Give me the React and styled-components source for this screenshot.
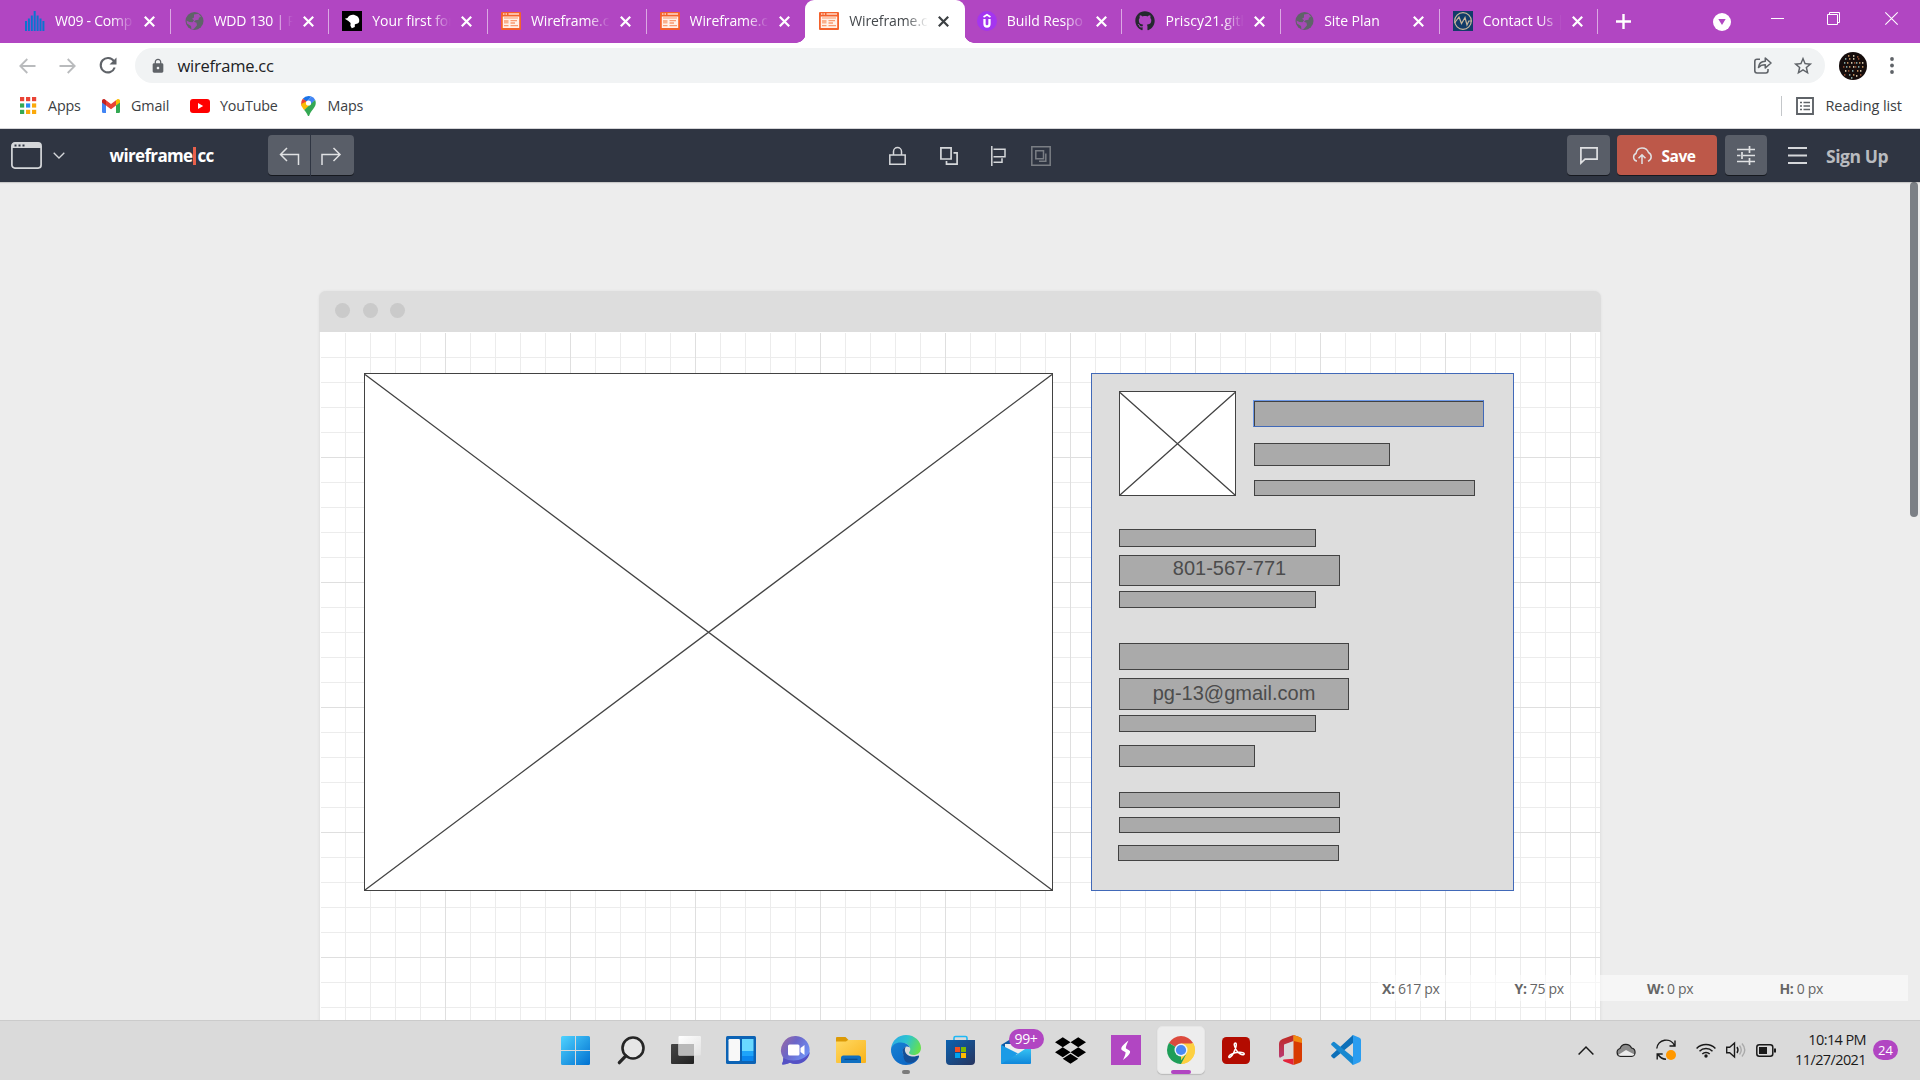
import React from "react";
import styled, { createGlobalStyle, css } from "styled-components";
import { FaGithub, FaDropbox } from "react-icons/fa";
import { MdLock, MdStarBorder } from "react-icons/md";

const Global = createGlobalStyle`
  * { box-sizing: border-box; }
  body { margin: 0; overflow: hidden; background: #ededed; font-family: "Open Sans", "Noto Sans", sans-serif; }
  svg { display: block; flex: none; overflow: visible; }
`;

const purple = "#b146c2";

const Screen = styled.div`
  width: 1920px;
  height: 1080px;
  display: flex;
  flex-direction: column;
  overflow: hidden;
`;

const Text = styled.span`
  white-space: pre;
  font-size: ${(p) => p.$size || 14}px;
  font-weight: ${(p) => p.$weight || 400};
  letter-spacing: ${(p) => p.$track || 0}px;
  color: ${(p) => p.$color || "#3c4043"};
  margin-left: ${(p) => p.$ml || 0}px;
  width: ${(p) => (p.$w ? `${p.$w}px` : "auto")};
  flex: none;
  line-height: 20px;
`;

const Slot = styled.div`
  flex: none;
  display: flex;
  align-items: center;
  justify-content: center;
  width: ${(p) => p.$w}px;
  margin-left: ${(p) => p.$ml || 0}px;
`;

/* ---------- tab strip ---------- */

const TabStrip = styled.div`
  flex: none;
  height: 43px;
  display: flex;
  align-items: center;
  padding-left: 11px;
  background: ${purple};
`;

const Tab = styled.div`
  flex: none;
  position: relative;
  width: 158.65px;
  height: 43px;
  display: flex;
  align-items: center;
  padding: 0 13px 1px 14px;
  ${(p) =>
    p.$line &&
    css`
      &::after {
        content: "";
        position: absolute;
        right: -1px;
        top: 9px;
        width: 1px;
        height: 25px;
        background: #dba9e3;
      }
    `}
  ${(p) =>
    p.$active &&
    css`
      background:
        radial-gradient(circle at 0 0, transparent 9.5px, #fff 10px) right bottom / 10px 10px no-repeat,
        radial-gradient(circle at 100% 0, transparent 9.5px, #fff 10px) left bottom / 10px 10px no-repeat;
      background: none;
      margin: 0 -10px;
      width: 178.65px;
      padding-left: 25px;
      padding-right: 22px;
      z-index: 1;
      &::before {
        content: "";
        position: absolute;
        z-index: -1;
        inset: 0 -0.35px 0 1px;
        background:
          radial-gradient(circle at 0 0, transparent 9.5px, #fff 10px) left bottom / 10px 10px no-repeat,
          radial-gradient(circle at 100% 0, transparent 9.5px, #fff 10px) right bottom / 10px 10px no-repeat;
        transform: none;
      }
    `}
`;

const ActiveShape = styled.div`
  position: absolute;
  z-index: -1;
  inset: 0 8px 0 11px;
  border-radius: 9px 9px 0 0;
  background: #fff;
`;

const Flare = styled.i`
  position: absolute;
  bottom: 0;
  width: 10px;
  height: 10px;
  ${(p) => (p.$right ? "left: calc(100% - 0.5px)" : "right: calc(100% - 0.5px)")};
  background: radial-gradient(circle at ${(p) => (p.$right ? "100%" : "0")} 0, transparent 9.5px, #fff 10px);
`;

const ActiveTab = styled(Tab)`
  background: none;
  &::before {
    display: none;
  }
`;

const TabTitle = styled.span`
  flex: none;
  width: 79px;
  height: 22px;
  line-height: 22px;
  margin-left: 10px;
  white-space: pre;
  font-size: 14px;
  letter-spacing: ${(p) => p.$track}px;
  color: ${(p) => (p.$active ? "#45494d" : "#fff")};
  mask-image: linear-gradient(to right, #000 57px, transparent 79px);
`;

const TabClose = styled.div`
  width: 12px;
  margin-left: 10px;
`;

const Cross = ({ color, size = 11, w = 2.2 }) => (
  <svg width={size} height={size} viewBox="0 0 11 11" stroke={color} strokeWidth={w}>
    <path d="M.8.8l9.4 9.4M10.2.8L.8 10.2" />
  </svg>
);

const BarsIcon = () => (
  <svg width="20" height="20" viewBox="0 0 20 20" fill="#0a74d0">
    {[[0, 10], [2.9, 7.5], [5.8, 4.5], [8.7, 0], [11.6, 4.5], [14.5, 7.5], [17.4, 10]].map(([x, y]) => (
      <rect key={x} x={x} y={y} width="2" height={20 - y} />
    ))}
  </svg>
);
const GlobeIcon = () => (
  <svg width="20" height="20" viewBox="0 0 20 20">
    <circle cx="10.500" cy="10" r="9" fill="#5f6368" />
    <path d="M10 3.500l4.500-.8 2.500 3-2 1-.5 2-3 .5-1.500 1.500 2.500 1 .5 2.500-3 3.500-2.500.7-.5-3.500-4-2.500-.5-3 3 1.500 3 .3 1.500-2-2-1.500 2-1.200z" fill={purple} opacity=".85" />
  </svg>
);
const DuckIcon = () => (
  <svg width="20" height="20" viewBox="0 0 20 20">
    <rect width="20" height="20" fill="#000" />
    <path d="M2.800 7.800L5.500 7C7 4.500 10 3.200 13 4.200c3.500 1 5 4 4 7-1 1.500-3.200 1.600-4.200 2.300v2.600l-3 1.200-1.400-2.600.2-2.600-2.200-2z" fill="#fff" />
  </svg>
);
const WireIcon = () => (
  <svg width="20" height="20" viewBox="0 0 20 20">
    <rect y="1" width="20" height="18" rx="1" fill="#f4622d" />
    <path d="M2 3h1.500M4.500 3H6M7.500 3H18" stroke="#ffd9c8" strokeWidth="1.500" />
    <rect x="1.800" y="5.500" width="16.400" height="11.500" fill="#fff1e9" />
    <path d="M3 7h14" stroke="#fbb493" strokeWidth="1.500" />
    <rect x="3" y="9" width="4.500" height="3.500" fill="#fbb08c" />
    <path d="M9.500 9.700H16M9.500 12H14M3 14.700h4.500M9.500 14.700H17" stroke="#f99a70" strokeWidth="1.300" />
  </svg>
);
const UdacityIcon = () => (
  <svg width="20" height="20" viewBox="0 0 20 20">
    <circle cx="10" cy="10" r="10" fill="#a435f0" />
    <path d="M6.500 6L10 3.800 13.500 6" fill="none" stroke="#fff" strokeWidth="1.800" />
    <path d="M7.500 8v5a2.500 2.500 0 0 0 5 0V8" fill="none" stroke="#fff" strokeWidth="2.300" />
  </svg>
);
const MgIcon = () => (
  <svg width="20" height="20" viewBox="0 0 20 20">
    <rect width="20" height="20" fill="#123c69" />
    <circle cx="10" cy="10" r="8.300" fill="none" stroke="#c9b79c" strokeWidth="1.200" />
    <path d="M1.500 12L6 6l2.500 6.500L12 6.500l2 7.500 1.800-4h3" fill="none" stroke="#c9b79c" strokeWidth="1.200" />
  </svg>
);

const tabs = [
  { t: "W09 - Comp", icon: <BarsIcon />, line: true, track: -0.25 },
  { t: "WDD 130 | P", icon: <GlobeIcon />, line: true, track: -0.2 },
  { t: "Your first for", icon: <DuckIcon />, line: true, track: -0.05 },
  { t: "Wireframe.c", icon: <WireIcon />, line: true, track: -0.1 },
  { t: "Wireframe.c", icon: <WireIcon />, track: -0.1 },
  { t: "Wireframe.c", icon: <WireIcon />, active: true, track: -0.1 },
  { t: "Build Respo", icon: <UdacityIcon />, line: true, track: -0.1 },
  { t: "Priscy21.gith", icon: <FaGithub size={20} color="#24292e" />, line: true, track: 0.1 },
  { t: "Site Plan", icon: <GlobeIcon />, line: true, track: -0.05 },
  { t: "Contact Us |", icon: <MgIcon />, line: true, track: -0.05 },
];

/* ---------- address bar ---------- */

const AddressRow = styled.div`
  flex: none;
  height: 45px;
  display: flex;
  align-items: center;
  background: #fff;
`;

const Omnibox = styled.div`
  width: 1690px;
  height: 35px;
  margin-left: 18px;
  border-radius: 18px;
  background: #f1f3f4;
  display: flex;
  align-items: center;
`;

const Push = styled.div`
  flex: 1;
`;

const Avatar = () => (
  <svg width="28" height="28" viewBox="0 0 28 28">
    <circle cx="14" cy="14" r="14" fill="#150d0c" />
    {[[9, 3], [14, 3], [18, 4], [6, 6], [10, 6], [14, 6], [19, 6], [5, 10], [8, 10], [12, 10], [15, 10], [17, 10], [20, 10], [23, 10], [4, 14], [7, 14], [10, 14], [14, 14], [16, 14], [19, 14], [23, 14], [6, 18], [9, 18], [13, 18], [18, 18], [21, 18], [5, 22], [10, 22], [14, 22], [17, 23], [21, 22], [12, 25]].map(([x, y], i) => (
      <rect key={i} x={x} y={y} width="1.400" height="1.800" fill={["#b98b5a", "#cfc3a8", "#8a4a2e", "#7fa3a0"][i % 4]} />
    ))}
  </svg>
);

const BookmarkRow = styled.div`
  flex: none;
  height: 41px;
  padding: 0 0 5px 20px;
  display: flex;
  align-items: center;
  background: #fff;
  border-bottom: 1px solid #d5d5d8;
`;

const Divider = styled.div`
  width: 1px;
  height: 20px;
  background: #c4c7ca;
`;

const AppsIcon = () => (
  <svg width="16" height="17" viewBox="0 0 16 17">
    {["#ea4335", "#ea4335", "#ea4335", "#34a853", "#2a8af6", "#fba90a", "#34a853", "#fba90a", "#fba90a"].map((c, i) => (
      <rect key={i} x={(i % 3) * 6} y={Math.floor(i / 3) * 6.4} width="4.200" height="4.200" fill={c} />
    ))}
  </svg>
);
const GmailIcon = () => (
  <svg width="18" height="14" viewBox="0 0 18 14">
    <path d="M0 2v10.800A1.200 1.200 0 0 0 1.200 14H4V6z" fill="#4285f4" />
    <path d="M18 2v10.800a1.200 1.200 0 0 1-1.200 1.200H14V6z" fill="#34a853" />
    <path d="M14 1.200V6.500l4-3V1.800C18 .2 16.200-.6 15 .4z" fill="#fbbc04" />
    <path d="M4 6.500V1.200l5 3.800 5-3.800v5.300l-5 3.800z" fill="#ea4335" />
    <path d="M0 1.800v1.700l4 3V1.200L3 .4C1.800-.6 0 .2 0 1.800z" fill="#c5221f" />
  </svg>
);
const YoutubeIcon = () => (
  <svg width="20" height="14" viewBox="0 0 20 14">
    <rect width="20" height="14" rx="3" fill="#f00" />
    <path d="M8 4l5.200 3L8 10z" fill="#fff" />
  </svg>
);
const MapsIcon = () => (
  <svg width="15" height="20" viewBox="0 0 15 20">
    <path d="M7.500 0A7.400 7.400 0 0 0 1.800 2.700L5.500 6l5-5.400A7 7 0 0 0 7.500 0z" fill="#1a73e8" />
    <path d="M1.800 2.700A7 7 0 0 0 .1 8l1 3L6 5.600z" fill="#ea4335" />
    <path d="M10.500.6L6.500 5l3.500 4 4.200-5A7.400 7.400 0 0 0 10.500.6z" fill="#4285f4" />
    <path d="M.1 8c.3 2.200 1.500 4 3 6L10 9 5.500 5.500z" fill="#fbbc04" />
    <path d="M14.200 4L3.200 14c1.800 2.200 3 3.700 3.500 5.500q.8 1.200 1.600 0c.7-2.600 2-4 3.700-6.300 2-2.600 3.700-5 2.200-9.200z" fill="#34a853" />
    <circle cx="7.500" cy="7" r="2.600" fill="#fff" />
  </svg>
);

/* ---------- application header ---------- */

const AppHeader = styled.header`
  flex: none;
  height: 53px;
  display: flex;
  align-items: center;
  background: #2f3542;
  color: #d5d7da;
  position: relative;
  z-index: 1;
  box-shadow: 0 1px 1px rgba(0, 0, 0, 0.15);
`;

const ToolButton = styled.button`
  flex: none;
  width: ${(p) => p.$w}px;
  height: 40px;
  margin: 0 0 1px ${(p) => p.$ml || 0}px;
  padding: 0;
  border: 0;
  border-radius: ${(p) => p.$radius || "4px"};
  background: ${(p) => (p.$primary ? "#bd5849" : "#595e68")};
  box-shadow: 0 1px 0 #16191f;
  color: #e0e1e3;
  font-family: inherit;
  display: flex;
  align-items: center;
  justify-content: center;
  padding: 1px ${(p) => p.$pr || 0}px 0 0;
`;

const Logo = styled.div`
  flex: none;
  width: 108px;
  margin-left: 45px;
  display: flex;
  align-items: center;
  font-size: 17px;
  font-weight: 700;
  line-height: 20px;
  color: #fff;
`;

const LogoWord = styled.span`
  letter-spacing: ${(p) => p.$track}px;
`;

const LogoBar = styled.i`
  width: 3px;
  height: 18px;
  margin: 1px 1px 0 1px;
  background: #e9604b;
`;

const Ico = ({ w, h, sw = 1.5, color = "currentColor", children }) => (
  <svg width={w} height={h} viewBox={`0 0 ${w} ${h}`} fill="none" stroke={color} strokeWidth={sw}>
    {children}
  </svg>
);

/* ---------- canvas ---------- */

const Workspace = styled.main`
  flex: none;
  position: relative;
  height: 838px;
  padding: 109px 0 0 319px;
  background: #ededed;
  overflow: hidden;
`;

const SketchWindow = styled.section`
  width: 1282px;
  height: 760px;
  border-radius: 7px 7px 0 0;
  overflow: hidden;
  background: #e3e3e3;
  padding: 0 1px;
  display: flex;
  flex-direction: column;
  box-shadow: 0 0 3px rgba(0, 0, 0, 0.06);
`;

const SketchBar = styled.div`
  flex: none;
  height: 41px;
  margin: 0 -1px;
  padding: 0 0 2px 16px;
  background: #ddd;
  display: flex;
  align-items: center;
  gap: 12.5px;
`;

const Dot = styled.i`
  width: 15px;
  height: 15px;
  border-radius: 50%;
  background: #cacaca;
`;

const Paper = styled.div`
  position: relative;
  flex: 1;
  background-color: #fff;
  background-image:
    linear-gradient(to right, #dfdfdf 1px, transparent 1px),
    linear-gradient(to bottom, #dfdfdf 1px, transparent 1px),
    linear-gradient(to right, #ececec 1px, transparent 1px),
    linear-gradient(to bottom, #ececec 1px, transparent 1px);
  background-size: 125px 125px, 125px 125px, 25px 25px, 25px 25px;
  box-shadow: inset 1px 1px 0 #fff;
`;

/* A shape dropped on the free drawing surface. */
const Shape = styled.div`
  position: absolute;
  left: ${(p) => p.$x}px;
  top: ${(p) => p.$y}px;
  width: ${(p) => p.$w}px;
  height: ${(p) => p.$h}px;
  border: 1px solid ${(p) => p.$line || "#424242"};
  background: ${(p) => p.$fill || "#aaa"};
  ${(p) =>
    p.$selected &&
    css`
      border-color: #6c97e6 #4169b8 #4169b8 #6c97e6;
      box-shadow: inset 1px 1px 0 #424242;
    `}
`;

const ShapeLabel = styled.div`
  font-family: "Liberation Sans", Arial, sans-serif;
  font-size: 20px;
  line-height: 24px;
  color: #4c4c4c;
  text-align: center;
  padding-top: ${(p) => p.$pt || 0}px;
`;

const Placeholder = ({ x, y, w, h }) => (
  <Shape $x={x} $y={y} $w={w} $h={h} $fill="#fff">
    <svg width={w - 2} height={h - 2} viewBox={`0 0 ${w - 2} ${h - 2}`} stroke="#444" strokeWidth="1.300">
      <path d={`M0 .5L${w - 2} ${h - 2}M${w - 2} .5L0 ${h - 2}`} />
    </svg>
  </Shape>
);

const bars = [
  { x: 933, y: 68, w: 231, h: 27, selected: true },
  { x: 934, y: 111, w: 136, h: 23 },
  { x: 934, y: 148, w: 221, h: 16 },
  { x: 799, y: 197, w: 197, h: 18 },
  { x: 799, y: 223, w: 221, h: 31, label: "801-567-771", pt: 0 },
  { x: 799, y: 259, w: 197, h: 17 },
  { x: 799, y: 311, w: 230, h: 27 },
  { x: 799, y: 346, w: 230, h: 32, label: "pg-13@gmail.com", pt: 2 },
  { x: 799, y: 383, w: 197, h: 17 },
  { x: 799, y: 413, w: 136, h: 22 },
  { x: 799, y: 460, w: 221, h: 16 },
  { x: 799, y: 485, w: 221, h: 16 },
  { x: 798, y: 513, w: 221, h: 16 },
];

const ScrollThumb = styled.div`
  position: absolute;
  right: 2px;
  top: 0;
  width: 8px;
  height: 335px;
  border-radius: 4px;
  background: #7c8086;
`;

const Readout = styled.div`
  position: absolute;
  left: 1378px;
  top: 793px;
  width: 530px;
  height: 26px;
  padding: 2px 0 0 4px;
  display: grid;
  grid-template-columns: repeat(4, 132.5px);
  align-items: center;
  background: rgba(255, 255, 255, 0.5);
  font-size: 14px;
  letter-spacing: -0.35px;
  line-height: 20px;
  color: #666;
`;

/* ---------- taskbar ---------- */

const Taskbar = styled.footer`
  flex: none;
  height: 60px;
  display: flex;
  align-items: center;
  padding-left: 548px;
  padding-bottom: 0;
  background: #dadada;
  box-shadow: inset 0 1px 0 #cbcbcb;
`;

const TaskItem = styled.div`
  flex: none;
  position: relative;
  width: 55px;
  height: 48px;
  display: flex;
  align-items: center;
  justify-content: center;
  &::after {
    content: "";
    position: absolute;
    left: 50%;
    bottom: 0;
    height: 4px;
    border-radius: 2px;
    width: ${(p) => (p.$active ? 20 : 8)}px;
    transform: translateX(-50%);
    display: ${(p) => (p.$active || p.$open ? "block" : "none")};
    background: ${(p) => (p.$active ? purple : "#7b7b7b")};
  }
`;

const Tile = styled.div`
  width: 48px;
  height: 48px;
  border-radius: 5px;
  border: 1px solid #e6e6e6;
  background: #ededed;
  box-shadow: 0 1px 1px rgba(0, 0, 0, 0.15);
  display: flex;
  align-items: center;
  justify-content: center;
`;

const MailBadge = styled.div`
  position: absolute;
  left: 20.5px;
  top: 3px;
  width: 35px;
  height: 20px;
  border-radius: 10px;
  background: ${purple};
  color: #fff;
  font-size: 14px;
  letter-spacing: -0.3px;
  line-height: 20px;
  text-align: center;
`;

const Clock = styled.div`
  width: 74px;
  margin-left: 16px;
  text-align: right;
  font-size: 14.5px;
  line-height: 20px;
  color: #1a1a1a;
  white-space: nowrap;
`;

const ClockLine = styled.div`
  letter-spacing: ${(p) => p.$track}px;
`;

const DayBadge = styled.div`
  width: 25px;
  height: 20px;
  margin: 0 22px 0 7px;
  border-radius: 10px;
  background: ${purple};
  color: #fff;
  font-size: 13px;
  line-height: 21px;
  text-align: center;
`;

const Grad = ({ id, a, b, x2 = 1, y2 = 1 }) => (
  <linearGradient id={id} x1="0" y1="0" x2={x2} y2={y2}>
    <stop offset="0" stopColor={a} />
    <stop offset="1" stopColor={b} />
  </linearGradient>
);

const StartIcon = () => (
  <svg width="29" height="29" viewBox="0 0 29 29">
    <defs><linearGradient id="win" gradientUnits="userSpaceOnUse" x1="0" y1="0" x2="29" y2="29"><stop offset="0" stopColor="#4fd3ff" /><stop offset="1" stopColor="#0070d0" /></linearGradient></defs>
    <path d="M1.500 0H14v14H0V1.500Q0 0 1.500 0zM15 0h12.500Q29 0 29 1.500V14H15zM0 15h14v14H1.500Q0 29 0 27.500zM15 15h14v12.500q0 1.500-1.500 1.500H15z" fill="url(#win)" />
  </svg>
);
const SearchIcon = () => (
  <svg width="28" height="29" viewBox="0 0 28 29">
    <circle cx="16" cy="12" r="10.500" fill="#e6e6e6" stroke="#262626" strokeWidth="2.600" />
    <path d="M8.800 19.800L2.300 26.700" stroke="#262626" strokeWidth="3.200" strokeLinecap="round" />
  </svg>
);
const TaskViewIcon = () => (
  <svg width="30" height="28" viewBox="0 0 30 28">
    <defs><Grad id="tv" a="#454545" b="#222" /><Grad id="tw" a="#fff" b="#e2e2e2" /></defs>
    <rect y="8" width="23" height="20" rx="1" fill="url(#tv)" />
    <rect x="7.500" width="22.500" height="19.500" rx="1" fill="url(#tw)" />
    <rect x="7.500" y="8" width="15.500" height="11.500" fill="#b9b9b9" />
  </svg>
);
const WidgetsIcon = () => (
  <svg width="30" height="28" viewBox="0 0 30 28">
    <rect width="30" height="28" rx="1.500" fill="#0c63b5" />
    <rect x="2.500" y="3" width="11.500" height="22" rx="1.200" fill="#f8f8f8" />
    <rect x="16" y="3" width="11.500" height="12" fill="#69d9ff" />
    <rect x="16" y="15" width="11.500" height="5" fill="#1ea4fa" />
    <rect x="16" y="20" width="11.500" height="5" fill="#0a86ee" />
  </svg>
);
const ChatIcon = () => (
  <svg width="30" height="29" viewBox="0 0 30 29">
    <defs><linearGradient id="ch" x1="0" y1="0" x2=".9" y2=".6"><stop offset="0" stopColor="#a0699f" /><stop offset=".5" stopColor="#6b66c9" /><stop offset="1" stopColor="#6f8df0" /></linearGradient></defs>
    <path d="M15 0a14 14 0 1 1-6 26.800Q4 29 1 28.300 2.500 25 2.300 22A14.300 14.300 0 0 1 15 0z" fill="url(#ch)" />
    <path d="M2.300 22Q2.500 25 1 28.300q3 .7 8-1.500c8 3.500 18 0 20-11-5 9-18 11-26.700 6.200z" fill="#5551c4" />
    <rect x="7" y="8.500" width="11.500" height="11" rx="1.500" fill="#fff" />
    <path d="M19.500 12l4-3v10l-4-3z" fill="#fff" />
  </svg>
);
const FolderIcon = () => (
  <svg width="30" height="26" viewBox="0 0 30 26">
    <defs><Grad id="fo" a="#ffd963" b="#f9b31a" /></defs>
    <path d="M0 1q0-1 1-1h8.500l3 3v4H0z" fill="#dc9a06" />
    <path d="M0 4.500h10l2-1.500h17q1 0 1 1v21q0 1-1 1H1q-1 0-1-1z" fill="url(#fo)" />
    <path d="M5 26v-5q0-2.500 2.500-2.500h15q2.500 0 2.500 2.500v5z" fill="#0f6fc0" />
    <path d="M8.500 22.300h13" stroke="#0a4b8c" strokeWidth="1.200" />
  </svg>
);
const EdgeIcon = () => (
  <svg width="30" height="30" viewBox="0 0 30 30">
    <defs>
      <linearGradient id="e1" x1="0" y1=".2" x2="1" y2=".5"><stop offset="0" stopColor="#2aa8e6" /><stop offset=".5" stopColor="#2cc4cf" /><stop offset="1" stopColor="#66e04f" /></linearGradient>
      <Grad id="e2" a="#1682d4" b="#0a5fc0" />
    </defs>
    <path d="M0 14C1 5 7.500 0 15 0c9 0 15 6.500 15 13 0 4.500-3.500 7-7.500 7-3 0-4.500-1.200-4.500-2.200s1.300-1.500 1.300-3.500C19.300 11 16 8 11.500 8 5.500 8 1 11 0 14z" fill="url(#e1)" />
    <path d="M0 14C1 10 5 7.300 10 7.500c5 .2 8 2.500 8.800 5C14 9.500 11 14 12 18.500c1 4.500 6 7.500 11 6.500 2-.4 3.500-1.500 4.500-2C25.500 27 21 30 15 30 6 30-.5 22.500 0 14z" fill="url(#e2)" />
    <path d="M12 18.500c-1-3 0-6 3-7-2.500 3-1 9 6 10 3 .3 5.500-1 6.800-1 .5.300.2 1.500-.3 2.500-3 4.500-8.500 6-12.500 4-2-1.500-2.500-5-3-8.500z" fill="#144f97" />
  </svg>
);
const StoreIcon = () => (
  <svg width="29" height="29" viewBox="0 0 29 29">
    <defs><Grad id="st" a="#0b62b0" b="#27345e" /></defs>
    <path d="M8 5V2q0-1.500 1.500-1.500h10Q21 .5 21 2v3" fill="none" stroke="#1fb8f5" strokeWidth="1.600" />
    <path d="M0 4h29v21q0 4-4 4H4q-4 0-4-4z" fill="url(#st)" />
    <rect x="9" y="11" width="5" height="5" fill="#f25022" /><rect x="15" y="11" width="5" height="5" fill="#7fba00" />
    <rect x="9" y="17" width="5" height="5" fill="#00a4ef" /><rect x="15" y="17" width="5" height="5" fill="#ffb900" />
  </svg>
);
const MailIcon = () => (
  <svg width="30" height="28" viewBox="0 0 30 28">
    <defs><Grad id="ma" a="#3fd0f8" b="#0f86da" x2="0" /></defs>
    <path d="M0 9L13 1q2-1 4 0l13 8v6H0z" fill="#0d5aa6" />
    <path d="M4 8h22v6l-10 6L4 13z" fill="#eee" />
    <path d="M0 9l15 10L30 9v18q0 1-1 1H1q-1 0-1-1z" fill="url(#ma)" />
    <path d="M0 28l17-10.500L0 9z" fill="#1a9be6" />
  </svg>
);
const StreamIcon = () => (
  <svg width="30" height="30" viewBox="0 0 30 30">
    <rect width="30" height="30" fill={purple} />
    <path d="M17.500 5.500C14 8 11 11 10.300 13q-.5 1.600 1.200 2.500l3 1.700q.6 1-2.500 7.800 5.500-4 7-7.200.6-1.700-1-2.600l-3-1.800q-.8-1 2.500-7.900z" fill="#fff" />
  </svg>
);
const ChromeIcon = () => (
  <svg width="28" height="28" viewBox="0 0 28 28">
    <path d="M14 14L1.900 7A14 14 0 0 1 26.100 7z" fill="#dc4a3d" />
    <path d="M14 14l12.100-7A14 14 0 0 1 14 28z" fill="#fdd041" />
    <path d="M14 14v14A14 14 0 0 1 1.900 7z" fill="#1e9e58" />
    <path d="M14 7.500h12.400a14 14 0 0 1-12.400 20.500l5.700-10.700z" fill="#fdd041" />
    <path d="M8.400 17.300L1.900 7q2.500 1 6 8zM19.700 17.300L14 28l-2-1z" fill="#1e9e58" />
    <circle cx="14" cy="14" r="6.500" fill="#eef3fb" />
    <circle cx="14" cy="14" r="5.100" fill="#4a8af4" />
  </svg>
);
const AcrobatIcon = () => (
  <svg width="28" height="27" viewBox="0 0 28 27">
    <rect width="28" height="27" rx="4.500" fill="#b30b00" />
    <path d="M13.500 6c-2 0-1.500 3 .8 7 2 3.500 5.500 5.500 7.500 4.500 1.500-1-1-2.700-5.500-2.300-4 .3-9.500 2.500-9.500 4.500 0 1.700 2.500.8 4.700-3.500C13.700 12 15.300 6 13.500 6z" fill="none" stroke="#fff" strokeWidth="1.500" />
  </svg>
);
const OfficeIcon = () => (
  <svg width="23" height="30" viewBox="0 0 23 30">
    <defs><Grad id="of" a="#c02a20" b="#b93a72" x2="0" /></defs>
    <path d="M14.500 0L3.500 4Q0 5.500 0 9v12q0 2 1.500 1.600L5 20.500V9.500L14.500 6z" fill="url(#of)" />
    <path d="M14.500 0l6.500 2.200q2 .8 2 3V25q0 2-2 2.700L14.500 30z" fill="#d83b01" />
    <path d="M14.500 0l6.500 2.200q2 .8 2 3V8L14.500 6z" fill="#f28a10" />
    <path d="M4.500 24.500l10-.8V30L5 26.500q-2-1-.5-2z" fill="#e3233a" />
  </svg>
);
const CodeIcon = () => (
  <svg width="30" height="30" viewBox="0 0 30 30">
    <path d="M22 0v8L3.500 23.200Q2.700 23.800 2 23L.4 21.500q-.7-.9 0-1.500z" fill="#0d6fb8" />
    <path d="M22 30v-8L3.500 7Q2.700 6.400 2 7L.4 8.500q-.7.8 0 1.500z" fill="#1788d0" />
    <path d="M22 0l6.500 2.800Q30 3.500 30 5v20q0 1.500-1.500 2.200L22 30q-1 0-1.500-.8 1.500.8 1.500-1V1.800q0-1.800-1.500-1Q21 0 22 0z" fill="#2a9df0" />
  </svg>
);

const Tray = styled.div`
  margin-left: auto;
  display: flex;
  align-items: center;
`;

export default function App() {
  return (
    <Screen>
      <Global />
      <TabStrip>
        {tabs.map((tab, i) => {
          const Box = tab.active ? ActiveTab : Tab;
          return (
            <Box key={i} $active={tab.active} $line={tab.line}>
              {tab.active && (
                <ActiveShape>
                  <Flare />
                  <Flare $right />
                </ActiveShape>
              )}
              {tab.icon}
              <TabTitle $active={tab.active} $track={tab.track}>{tab.t}</TabTitle>
              <TabClose><Cross color={tab.active ? "#3c4043" : "#fff"} /></TabClose>
            </Box>
          );
        })}
        <Slot $w={16} $ml={18}>
          <Ico w={15} h={15} sw={2.4} color="#fff"><path d="M7.500 0v15M0 7.500h15" /></Ico>
        </Slot>
        <Slot $w={18} $ml={81.5}>
          <svg width="18" height="18" viewBox="0 0 18 18"><circle cx="9" cy="9" r="9" fill="#fff" /><path d="M5.300 6h7.400L9 12z" fill={purple} /></svg>
        </Slot>
        <Slot $w={13} $ml={40}>
          <Ico w={13} h={7} sw={1} color="#fff"><path d="M0 .5h13" /></Ico>
        </Slot>
        <Slot $w={13} $ml={43}>
          <svg width="13" height="19" viewBox="0 0 13 19" fill="none" stroke="#fff"><path d="M.5 2.500h10v10H.5zM2.500 2.500v-2h10v10h-2" /></svg>
        </Slot>
        <Slot $w={13} $ml={45}>
          <svg width="13" height="19" viewBox="0 0 13 19" stroke="#fff" strokeWidth="1.100"><path d="M.3.300l12.400 12.400M12.700.3L.3 12.700" /></svg>
        </Slot>
      </TabStrip>

      <AddressRow>
        <Slot $w={17} $ml={19}><Ico w={17} h={16} sw={1.8} color="#b9bbbd"><path d="M16.500 8H1.500M8.300 1L1.300 8l7 7" /></Ico></Slot>
        <Slot $w={17} $ml={23}><Ico w={17} h={16} sw={1.8} color="#b9bbbd"><path d="M.5 8h15M8.700 1l7 7-7 7" /></Ico></Slot>
        <Slot $w={18} $ml={23}>
          <Ico w={18} h={17} sw={2.1} color="#5f6368">
            <path d="M14.800 4A7.200 7.200 0 1 0 15.700 10.500" />
            <path d="M17.500.5v7h-7z" fill="#5f6368" stroke="none" />
          </Ico>
        </Slot>
        <Omnibox>
          <Slot $w={16} $ml={14.5}><MdLock size={16} color="#5f6368" /></Slot>
          <Text $size={16.5} $ml={12} $track={-0.25} $color="#202124">wireframe.cc</Text>
          <Push />
          <Slot $w={18}>
            <Ico w={18} h={17} sw={1.6} color="#5f6368">
              <path d="M6 2.200H3q-2.200 0-2.200 2.200v9.400Q.8 16 3 16h8.800q2.200 0 2.200-2.200V12" />
              <path d="M4.500 10.500q.5-6 6.800-6.200V1l5.700 5-5.700 5V7.800q-4.500 0-6.800 2.700z" strokeLinejoin="round" />
            </Ico>
          </Slot>
          <Slot $w={21} $ml={20.5}><MdStarBorder size={22} color="#5f6368" /></Slot>
          <Slot $w={12} />
        </Omnibox>
        <Slot $w={28} $ml={14}><Avatar /></Slot>
        <Slot $w={4} $ml={23}>
          <svg width="4" height="17" viewBox="0 0 4 17" fill="#5f6368"><circle cx="2" cy="2" r="1.900" /><circle cx="2" cy="8.500" r="1.900" /><circle cx="2" cy="15" r="1.900" /></svg>
        </Slot>
      </AddressRow>

      <BookmarkRow>
        <AppsIcon />
        <Text $ml={12} $w={33} $size={14.3} $track={-0.15}>Apps</Text>
        <Slot $w={18} $ml={21}><GmailIcon /></Slot>
        <Text $ml={11} $w={38} $size={14.3} $track={-0.1}>Gmail</Text>
        <Slot $w={20} $ml={21}><YoutubeIcon /></Slot>
        <Text $ml={10} $w={57} $size={14.3} $track={-0.15}>YouTube</Text>
        <Slot $w={15} $ml={23.5}><MapsIcon /></Slot>
        <Text $ml={12} $size={14.3} $track={-0.2}>Maps</Text>
        <Push />
        <Divider />
        <Slot $w={18} $ml={14}>
          <Ico w={18} h={18} sw={1.9} color="#5f6368">
            <path d="M1 1h16v16H1z" />
            <path d="M4 5.500h2M7.500 5.500H14M4 9h2M7.500 9H14M4 12.500h2M7.500 12.500H14" strokeWidth="1.500" />
          </Ico>
        </Slot>
        <Text $ml={11.5} $w={76} $size={14.5} $track={-0.1}>Reading list</Text>
        <Slot $w={18.5} />
      </BookmarkRow>

      <AppHeader>
        <Slot $w={31} $ml={11}>
          <svg width="31" height="27" viewBox="0 0 31 27">
            <rect x=".9" y=".9" width="29.200" height="25.200" rx="3" fill="none" stroke="#d5d7da" strokeWidth="1.700" />
            <path d="M1 6V3.500Q1 1 3.500 1h24Q30 1 30 3.500V6z" fill="#d5d7da" />
            <path d="M3.500 3.500h2M7.500 3.500h2M11.500 3.500h2" stroke="#2f3542" strokeWidth="1.800" />
          </svg>
        </Slot>
        <Slot $w={12} $ml={10.5}><Ico w={12} h={7} sw={1.3}><path d="M.7.700L6 6l5.300-5.300" /></Ico></Slot>
        <Logo><LogoWord $track={-0.65}>wireframe</LogoWord><LogoBar /><LogoWord $track={-0.6}>cc</LogoWord></Logo>
        <ToolButton $w={42} $ml={50.5} $radius="4px 0 0 4px">
          <Ico w={20} h={18}><path d="M19.500 18V7.500H2M8 1L1.500 7.500 8 14" /></Ico>
        </ToolButton>
        <ToolButton $w={43} $ml={1} $radius="0 4px 4px 0" $pr={3}>
          <Ico w={20} h={18}><path d="M1 18V7.500h17.500M12.500 1L19 7.500 12.500 14" /></Ico>
        </ToolButton>
        <Slot $w={17} $ml={535}><Ico w={17} h={18}><path d="M.8 8h15.400v9.200H.8zM4.500 8V4.500a4 4 0 0 1 8 0V8" /></Ico></Slot>
        <Slot $w={18} $ml={33.5}><Ico w={18} h={18} sw={1.7}><path d="M.9.900h10.200V12H.9zM13.500 5.800h3.600v11.300H6.500v-3" /></Ico></Slot>
        <Slot $w={15} $ml={33}><Ico w={15} h={20}><path d="M.8 0v20M2.500 3.300h11.500v7.400H2.500M2.500 16.200h8.500v-4" /></Ico></Slot>
        <Slot $w={20} $ml={25}><Ico w={20} h={20} color="#7a7e84"><path d="M.8.800h18.400v18.400H.8zM4.800 4.800h7.700v8H4.800zM14.800 7.500v7.800H8" /></Ico></Slot>
        <Push />
        <ToolButton $w={43}><Ico w={18} h={17} sw={1.7}><path d="M.9.900h16.200v11.300H5L.9 16z" /></Ico></ToolButton>
        <ToolButton $w={100} $ml={7} $primary $pr={6}>
          <Ico w={20} h={17} sw={1.5}>
            <path d="M5 14H4.500A4 4 0 0 1 4 6.500Q5 1 10 .9q5 0 6.500 4.600Q19.200 7 19.200 9.800q0 3-3.200 4.600M10 17V8M6.500 11.300L10 7.800l3.500 3.500" />
          </Ico>
          <Text $size={15.5} $weight={700} $color="#fff" $ml={9} $w={35} $track={-0.5}>Save</Text>
        </ToolButton>
        <ToolButton $w={42} $ml={8}>
          <Ico w={18} h={19} sw={1.7}><path d="M0 3.500h18M0 9.500h3.500M6 9.500h12M0 15.500h18M12.500 0v7M5 6v7M12.500 12v7" /></Ico>
        </ToolButton>
        <Slot $w={19} $ml={21}><Ico w={19} h={17} sw={1.8}><path d="M0 1h19M0 8.500h19M0 16h19" /></Ico></Slot>
        <Text $size={17.5} $weight={700} $color="#b9bbbf" $ml={19} $w={66} $track={-0.45}>Sign Up</Text>
        <Slot $w={28} />
      </AppHeader>

      <Workspace>
        <SketchWindow>
          <SketchBar><Dot /><Dot /><Dot /></SketchBar>
          <Paper>
            <Placeholder x={44} y={41} w={689} h={518} />
            <Shape $x={771} $y={41} $w={423} $h={518} $fill="#ddd" $line="#4169b8" />
            <Placeholder x={799} y={59} w={117} h={105} />
            {bars.map((b, i) => (
              <Shape key={i} $x={b.x} $y={b.y} $w={b.w} $h={b.h} $selected={b.selected}>
                {b.label && <ShapeLabel $pt={b.pt}>{b.label}</ShapeLabel>}
              </Shape>
            ))}
          </Paper>
        </SketchWindow>
        <Readout>
          <span><b>X:</b> 617 px</span>
          <span><b>Y:</b> 75 px</span>
          <span><b>W:</b> 0 px</span>
          <span><b>H:</b> 0 px</span>
        </Readout>
        <ScrollThumb />
      </Workspace>

      <Taskbar>
        <TaskItem><StartIcon /></TaskItem>
        <TaskItem><SearchIcon /></TaskItem>
        <TaskItem><TaskViewIcon /></TaskItem>
        <TaskItem><WidgetsIcon /></TaskItem>
        <TaskItem><ChatIcon /></TaskItem>
        <TaskItem><FolderIcon /></TaskItem>
        <TaskItem $open><EdgeIcon /></TaskItem>
        <TaskItem><StoreIcon /></TaskItem>
        <TaskItem><MailIcon /><MailBadge>99+</MailBadge></TaskItem>
        <TaskItem><FaDropbox size={31} color="#000" /></TaskItem>
        <TaskItem><StreamIcon /></TaskItem>
        <TaskItem $active><Tile><ChromeIcon /></Tile></TaskItem>
        <TaskItem><AcrobatIcon /></TaskItem>
        <TaskItem><OfficeIcon /></TaskItem>
        <TaskItem><CodeIcon /></TaskItem>
        <Tray>
          <Slot $w={16}><Ico w={16} h={9} sw={1.5} color="#1a1a1a"><path d="M.6 8.500L8 1l7.400 7.500" /></Ico></Slot>
          <Slot $w={20} $ml={22}>
            <svg width="20" height="14" viewBox="0 0 20 14">
              <path d="M4.500 13.300A4 4 0 0 1 4 5.500 6.200 6.200 0 0 1 15.500 5a4.200 4.200 0 0 1 0 8.300z" fill="#8b8b8b" stroke="#222" strokeWidth="1.200" />
              <path d="M2 12l8-5 8.500 4.500q-1 1.300-3 1.300h-11z" fill="#ececec" />
            </svg>
          </Slot>
          <Slot $w={20} $ml={20}>
            <Ico w={20} h={20} sw={1.4} color="#1a1a1a">
              <path d="M.8 8.500A9.300 9.300 0 0 1 18.500 5.500M19 .5v5.500h-5.500M10 19.300Q5 19 2 14.500M1.200 19.500V14h5.500" />
              <circle cx="15" cy="15" r="5" fill="#ff9800" stroke="none" />
            </Ico>
          </Slot>
          <Slot $w={20} $ml={20}>
            <Ico w={20} h={15} sw={1.5} color="#1a1a1a">
              <path d="M.6 5.500a13.200 13.200 0 0 1 18.800 0M3.500 8.300a9.200 9.200 0 0 1 13 0M6.300 11a5.200 5.200 0 0 1 7.400 0" />
              <circle cx="10" cy="13" r="1.700" fill="#1a1a1a" stroke="none" />
            </Ico>
          </Slot>
          <Slot $w={20} $ml={10}>
            <Ico w={20} h={16} sw={1.4} color="#1a1a1a">
              <path d="M.7 5.300h3L8.500 1v14l-4.800-4.300h-3zM11 5q2 3 0 6" />
              <path d="M13.500 3.500q3.500 4.500 0 9M16 1.500q5.500 6.500 0 13" stroke="#aaa" />
            </Ico>
          </Slot>
          <Slot $w={20} $ml={10}>
            <Ico w={20} h={13} sw={1.5} color="#1a1a1a">
              <rect x=".8" y=".8" width="16" height="11.400" rx="2.500" />
              <rect x="3" y="3" width="8" height="7" fill="#1a1a1a" stroke="none" />
              <path d="M19 4.500v4" strokeWidth="2" />
            </Ico>
          </Slot>
          <Clock>
            <ClockLine $track={-0.6}>10:14 PM</ClockLine>
            <ClockLine $track={-0.6}>11/27/2021</ClockLine>
          </Clock>
          <DayBadge>24</DayBadge>
        </Tray>
      </Taskbar>
    </Screen>
  );
}
